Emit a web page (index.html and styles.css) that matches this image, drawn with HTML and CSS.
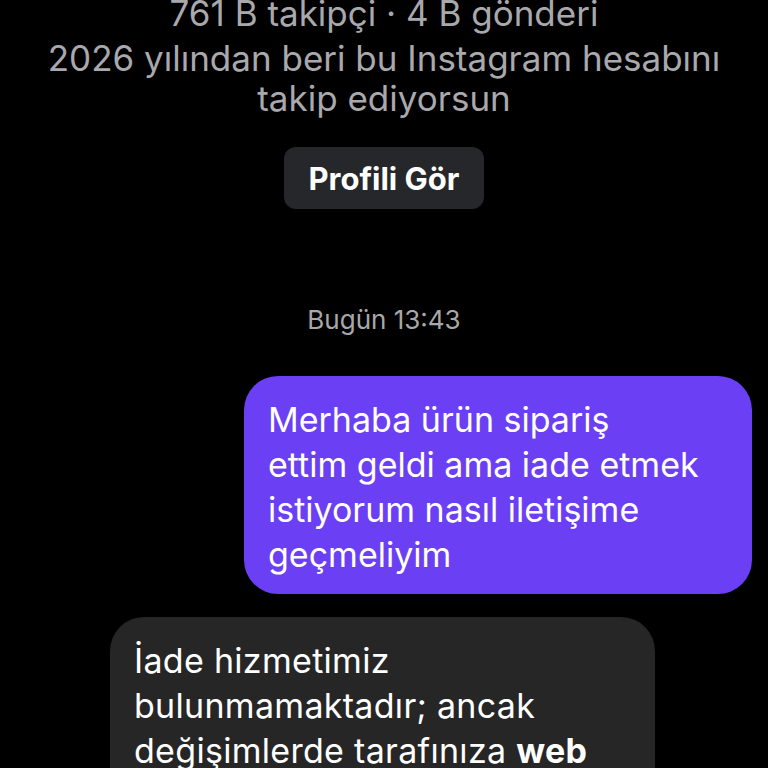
FILE: index.html
```html
<!DOCTYPE html>
<html lang="tr">
<head>
<meta charset="utf-8">
<link rel="stylesheet" href="styles.css">
</head>
<body>
<div class="screen">
  <div class="profile-info">
    <p class="meta">761 B takipçi · 4 B gönderi</p>
    <p class="meta">2026 yılından beri bu Instagram hesabını<br>takip ediyorsun</p>
  </div>
  <div class="btn-row"><button class="profile-btn">Profili Gör</button></div>
  <div class="timestamp">Bugün 13:43</div>
  <div class="row row-out">
    <div class="bubble bubble-out">Merhaba ürün sipariş<br>ettim geldi ama iade etmek<br>istiyorum nasıl iletişime<br>geçmeliyim</div>
  </div>
  <div class="row row-in">
    <div class="bubble bubble-in">İade hizmetimiz<br>bulunmamaktadır; ancak<br>değişimlerde tarafınıza <b>web</b></div>
  </div>
</div>
</body>
</html>
```
FILE: styles.css
```css
html, body {
  margin: 0;
  padding: 0;
  background: #000;
  height: 768px;
  overflow: hidden;
}
.screen {
  font-family: Inter, "Noto Sans", sans-serif;
  display: flex;
  flex-direction: column;
  margin-top: -7px;
}
.profile-info {
  text-align: center;
  color: #a9a9ad;
  font-size: 35px;
  line-height: 40px;
  padding: 0 10px;
  display: flex;
  flex-direction: column;
  gap: 5px;
}
.meta {
  margin: 0;
}
.btn-row {
  display: flex;
  justify-content: center;
  margin-top: 29px;
}
.profile-btn {
  font-family: Inter, "Noto Sans", sans-serif;
  font-weight: 700;
  font-size: 31px;
  color: #fff;
  background: #25272a;
  border: none;
  border-radius: 12px;
  width: 200px;
  height: 62px;
  padding: 0;
}
.timestamp {
  text-align: center;
  color: #a8a8a8;
  font-size: 26px;
  margin-top: 96px;
  line-height: 30px;
}
.row {
  display: flex;
}
.row-out {
  justify-content: flex-end;
  padding-right: 16px;
  margin-top: 41px;
}
.row-in {
  padding-left: 110px;
  margin-top: 23px;
}
.bubble {
  font-size: 34px;
  line-height: 45px;
  color: #fff;
  padding: 21px 24px 17px 24px;
  border-radius: 34px;
  box-sizing: border-box;
  white-space: nowrap;
}
.bubble-out {
  background: #6b3ff3;
  width: 508px;
  height: 218px;
}
.bubble-in {
  background: #262626;
  width: 545px;
  padding-bottom: 60px;
  letter-spacing: 0.3px;
}
.bubble-in b {
  font-weight: 700;
}
```
